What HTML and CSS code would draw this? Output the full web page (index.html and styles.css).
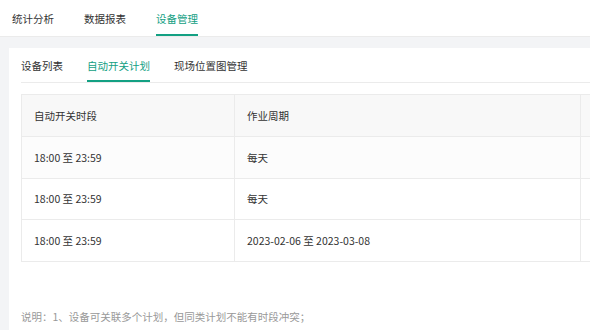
FILE: index.html
```html
<!DOCTYPE html>
<html lang="zh-CN">
<head>
  <meta charset="UTF-8" />
  <meta name="viewport" content="width=device-width, initial-scale=1.0"/>
  <title>设备管理</title>
  <link rel="stylesheet" href="styles.css">
</head>
<body>
  <div class="topnav">
    <a class="nav-item">统计分析</a>
    <a class="nav-item">数据报表</a>
    <a class="nav-item active">设备管理</a>
  </div>

  <div class="page">
    <div class="card">
      <div class="subtabs">
        <a class="subtab">设备列表</a>
        <a class="subtab active">自动开关计划</a>
        <a class="subtab">现场位置图管理</a>
      </div>

      <table class="plan-table">
        <colgroup>
          <col class="col-time">
          <col class="col-cycle">
          <col>
        </colgroup>
        <thead>
          <tr>
            <th>自动开关时段</th>
            <th>作业周期</th>
            <th></th>
          </tr>
        </thead>
        <tbody>
          <tr class="hover">
            <td>18:00 至 23:59</td>
            <td>每天</td>
            <td></td>
          </tr>
          <tr>
            <td>18:00 至 23:59</td>
            <td>每天</td>
            <td></td>
          </tr>
          <tr>
            <td>18:00 至 23:59</td>
            <td>2023-02-06 至 2023-03-08</td>
            <td></td>
          </tr>
        </tbody>
      </table>

      <div class="note">
        <p>说明：1、设备可关联多个计划，但同类计划不能有时段冲突；</p>
      </div>
    </div>
  </div>
</body>
</html>
```

FILE: styles.css
```css
body {
  margin: 0;
  background: #f3f4f6;
  font-family: "Noto Sans CJK SC", "Noto Sans", sans-serif;
  font-size: 10.5px;
  color: #333;
  overflow: hidden;
}
.topnav {
  display: flex;
  gap: 30px;
  height: 37px;
  padding-left: 12px;
  background: #fff;
  border-bottom: 1px solid #ebebeb;
  box-sizing: border-box;
}
.nav-item {
  display: flex;
  align-items: center;
  height: 100%;
  border-bottom: 2px solid transparent;
  box-sizing: border-box;
  padding-top: 2px;
  color: #333;
  cursor: pointer;
}
.nav-item.active {
  color: #13a083;
  border-bottom-color: #13a083;
}
.page {
  padding: 11px 0 0 9px;
}
.card {
  background: #fff;
  width: 720px;
  padding: 0 12px;
  height: 300px;
}
.subtabs {
  display: flex;
  gap: 24px;
  height: 35px;
  border-bottom: 1px solid #ebebeb;
  box-sizing: border-box;
}
.subtab {
  display: flex;
  align-items: center;
  border-bottom: 2px solid transparent;
  padding-top: 2px;
  color: #333;
  cursor: pointer;
}
.subtab.active {
  color: #13a083;
  border-bottom-color: #13a083;
}
.plan-table {
  margin-top: 11px;
  width: 100%;
  border-collapse: collapse;
  table-layout: fixed;
}
.col-time {
  width: 213px;
}
.col-cycle {
  width: 346px;
}
.plan-table th,
.plan-table td {
  text-align: left;
  font-weight: normal;
  padding: 0 12px;
  height: 40.5px;
  border: 1px solid #ebebeb;
  color: #333;
}
.plan-table th {
  background: #f8f8f8;
  height: 41px;
}
.plan-table tr.hover td {
  background: #fcfcfc;
}
.note {
  margin-top: 46px;
  color: #999;
  line-height: 18px;
}
.note p {
  margin: 0;
}
```
